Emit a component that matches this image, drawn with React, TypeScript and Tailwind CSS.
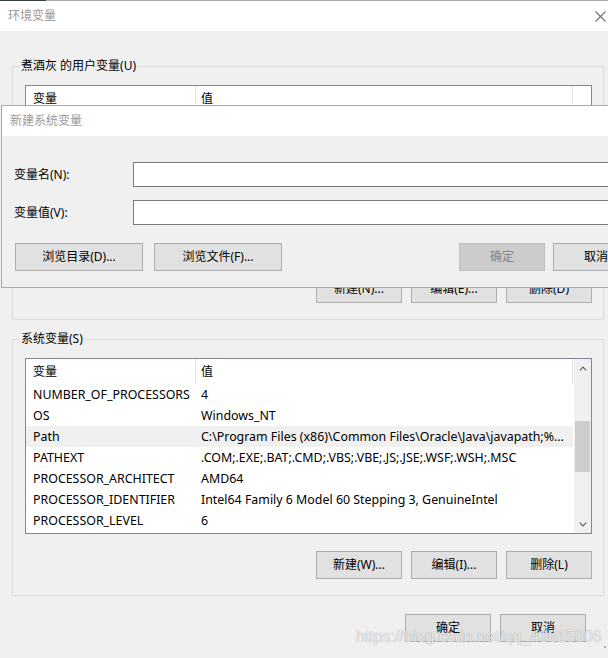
import React from 'react'

const sysRows: Array<[string, string]> = [
    ['NUMBER_OF_PROCESSORS', '4'],
    ['OS', 'Windows_NT'],
    ['Path', 'C:\\Program Files (x86)\\Common Files\\Oracle\\Java\\javapath;%...'],
    ['PATHEXT', '.COM;.EXE;.BAT;.CMD;.VBS;.VBE;.JS;.JSE;.WSF;.WSH;.MSC'],
    ['PROCESSOR_ARCHITECT', 'AMD64'],
    ['PROCESSOR_IDENTIFIER', 'Intel64 Family 6 Model 60 Stepping 3, GenuineIntel'],
    ['PROCESSOR_LEVEL', '6'],
]

function Btn({ label, wide, disabled }: { label: string; wide?: boolean; disabled?: boolean }) {
    return (
        <div
            className={`${wide ? 'w-[128px]' : 'w-[86px]'} h-[28px] shrink-0 flex items-center justify-center border text-[12px] leading-[16px] ${
                disabled ? 'bg-[#cccccc] border-[#bfbfbf] text-[#838383]' : 'bg-[#e1e1e1] border-[#adadad] text-black'
            }`}
        >
            {label}
        </div>
    )
}

function Chevron({ up }: { up?: boolean }) {
    return (
        <svg width="8" height="5" viewBox="0 0 8 5">
            <path
                d={up ? 'M0.8 4.3 L4 1.1 L7.2 4.3' : 'M0.8 0.7 L4 3.9 L7.2 0.7'}
                fill="none"
                stroke="#606060"
                strokeWidth="1.2"
            />
        </svg>
    )
}

function VarList({ rows, selected, scroll }: { rows: Array<[string, string]>; selected?: string; scroll?: boolean }) {
    return (
        <div className="h-[176px] w-[567px] border border-[#828790] bg-white flex">
            <div className="flex-1 min-w-0 flex flex-col">
                <div className="h-[25px] flex shrink-0">
                    <div className="w-[170px] border-r border-[#e5e5e5] pl-[7px] flex items-center">变量</div>
                    <div className="w-[377px] border-r border-[#e5e5e5] pl-[5px] flex items-center">值</div>
                </div>
                {rows.map(([name, value]) => (
                    <div
                        key={name}
                        className={`h-[21px] w-[547px] flex items-center shrink-0 text-[12.4px] ${name === selected ? 'bg-[#f0f0f0]' : ''}`}
                    >
                        <div className="w-[170px] pl-[7px] whitespace-nowrap overflow-hidden">{name}</div>
                        <div className="w-[377px] pl-[5px] whitespace-nowrap overflow-hidden">{value}</div>
                    </div>
                ))}
            </div>
            {scroll && (
                <div className="w-[17px] bg-[#f0f0f0] flex flex-col shrink-0">
                    <div className="h-[17px] flex items-center justify-center pt-[2px]">
                        <Chevron up />
                    </div>
                    <div className="flex-1">
                        <div className="mt-[45px] h-[51px] mx-[1px] bg-[#cdcdcd]" />
                    </div>
                    <div className="h-[17px] flex items-center justify-center">
                        <Chevron />
                    </div>
                </div>
            )}
        </div>
    )
}

export default function App() {
    return (
        <div className="relative w-[608px] h-[658px] overflow-hidden bg-[#f0f0f0] text-[12px] leading-[16px] text-black font-['Noto_Sans','Noto_Sans_CJK_SC',sans-serif]">
            {/* top edge */}
            <div className="flex h-px">
                <div className="w-[46px] bg-[#33403f]" />
                <div className="flex-1 bg-[#ababab]" />
            </div>

            {/* title bar */}
            <div className="h-[30px] bg-white flex items-center pl-[8px] pr-[2px]">
                <span className="flex-1 text-[#999999]">环境变量</span>
                <svg width="11" height="11" viewBox="0 0 11 11" className="block shrink-0">
                    <line x1="0.5" y1="0.5" x2="10.5" y2="10.5" stroke="#6e6e6e" strokeWidth="1.1" />
                    <line x1="10.5" y1="0.5" x2="0.5" y2="10.5" stroke="#6e6e6e" strokeWidth="1.1" />
                </svg>
            </div>

            <div className="pl-[12px] pr-[4px]">
                {/* user variables */}
                <fieldset className="mt-[27px] border border-[#dcdcdc] pl-[7px]">
                    <legend className="px-[1px] leading-[16px]">煮酒灰 的用户变量(U)</legend>
                    <div className="pl-[5px] pr-[11px] pt-[11px] pb-[16px]">
                        <VarList rows={[]} />
                        <div className="mt-[14px] flex justify-end gap-[9px]">
                            <Btn label="新建(N)..." />
                            <Btn label="编辑(E)..." />
                            <Btn label="删除(D)" />
                        </div>
                    </div>
                </fieldset>

                {/* system variables */}
                <fieldset className="mt-[11px] border border-[#dcdcdc] pl-[7px]">
                    <legend className="px-[1px] leading-[16px]">系统变量(S)</legend>
                    <div className="pl-[5px] pr-[11px] pt-[11px] pb-[16px]">
                        <VarList rows={sysRows} selected="Path" scroll />
                        <div className="mt-[17px] flex justify-end gap-[9px]">
                            <Btn label="新建(W)..." />
                            <Btn label="编辑(I)..." />
                            <Btn label="删除(L)" />
                        </div>
                    </div>
                </fieldset>
            </div>

            <div className="mt-[18px] flex justify-end gap-[9px] pr-[22px]">
                <Btn label="确定" />
                <Btn label="取消" />
            </div>

            {/* new system variable dialog */}
            <div className="absolute left-[1px] top-[105px] w-[660px] h-[183px] border border-[#aaaaaa] bg-[#f0f0f0] flex flex-col">
                <div className="h-[30px] bg-white flex items-center pl-[8px] shrink-0">
                    <span className="text-[#999999]">新建系统变量</span>
                </div>
                <div className="pl-[12px] pr-[14px]">
                    <div className="mt-[26px] flex items-center">
                        <div className="w-[119px]">变量名(N):</div>
                        <div className="flex-1 h-[25px] bg-white border border-[#7a7a7a]" />
                    </div>
                    <div className="mt-[13px] flex items-center">
                        <div className="w-[119px]">变量值(V):</div>
                        <div className="flex-1 h-[25px] bg-white border border-[#7a7a7a]" />
                    </div>
                    <div className="mt-[18px] flex pl-[1px]">
                        <div className="flex gap-[11px]">
                            <Btn wide label="浏览目录(D)..." />
                            <Btn wide label="浏览文件(F)..." />
                        </div>
                        <div className="ml-[177px] flex gap-[8px]">
                            <Btn disabled label="确定" />
                            <Btn label="取消" />
                        </div>
                    </div>
                </div>
            </div>

            {/* watermark */}
            <div className="absolute left-[356px] top-[628px] font-['Liberation_Sans',sans-serif] text-[16px] leading-[18px] text-white/80 [text-shadow:0_0_1px_rgba(0,0,0,0.45)] whitespace-nowrap">
                https://blog.csdn.net/qq_43615806
            </div>

            {/* resize grip */}
            <div className="absolute right-[2px] bottom-[10px] w-[2px] h-[2px] bg-[#b0b0b0]" />
        </div>
    )
}
